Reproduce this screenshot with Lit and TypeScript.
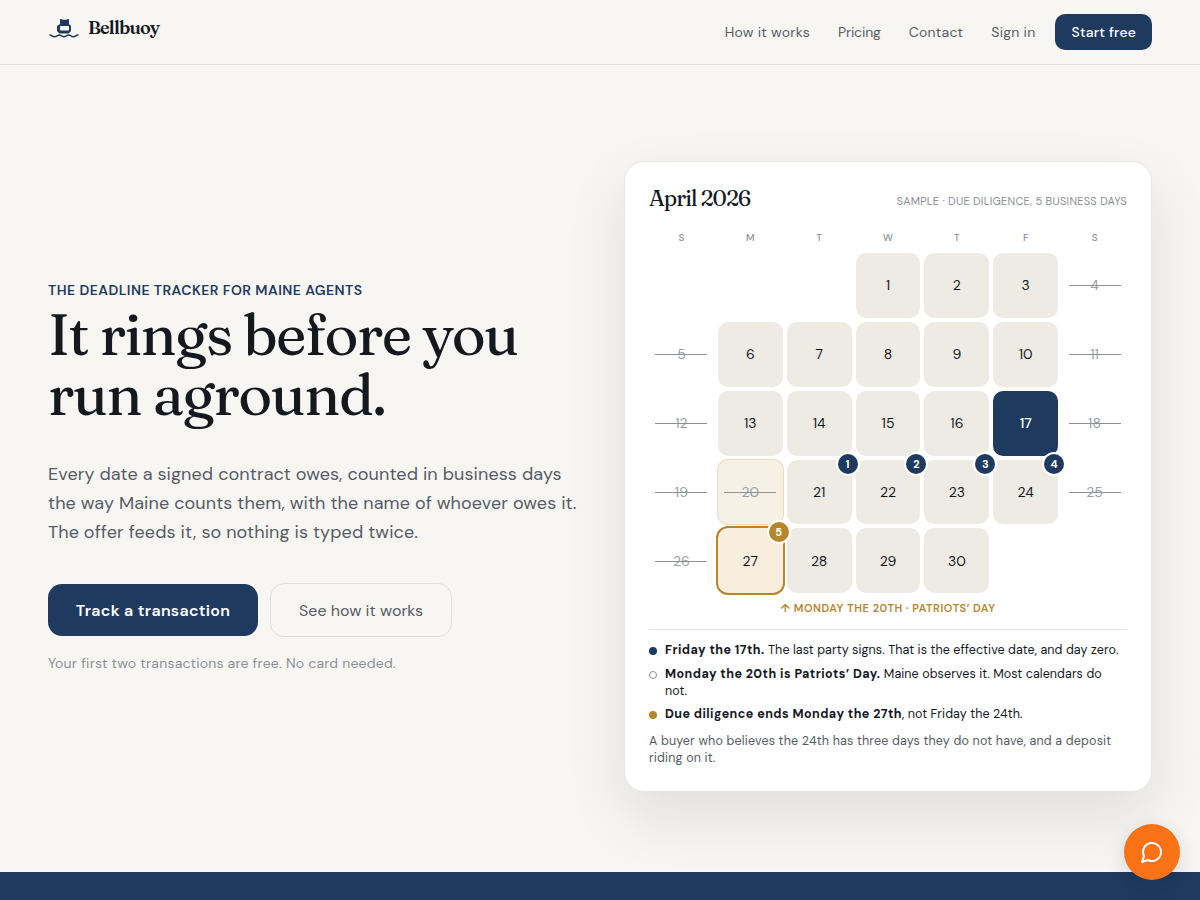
import { LitElement, html, css, nothing } from "lit";
import { customElement } from "lit/decorators.js";

const SANS = css`"DM Sans", "Inter", "Noto Sans", sans-serif`;
const SERIF = css`"Fraunces", "Liberation Serif", serif`;

type Cell = { d?: number; k?: string; b?: number };
const cells: Cell[] = [
  {}, {}, {}, { d: 1 }, { d: 2 }, { d: 3 }, { d: 4, k: "off" },
  { d: 5, k: "off" }, { d: 6 }, { d: 7 }, { d: 8 }, { d: 9 }, { d: 10 }, { d: 11, k: "off" },
  { d: 12, k: "off" }, { d: 13 }, { d: 14 }, { d: 15 }, { d: 16 }, { d: 17, k: "start" }, { d: 18, k: "off" },
  { d: 19, k: "off" }, { d: 20, k: "holiday" }, { d: 21, b: 1 }, { d: 22, b: 2 }, { d: 23, b: 3 }, { d: 24, b: 4 }, { d: 25, k: "off" },
  { d: 26, k: "off" }, { d: 27, k: "end", b: 5 }, { d: 28 }, { d: 29 }, { d: 30 }, {}, {},
];

@customElement("app-root")
export class AppRoot extends LitElement {
  static styles = css`
    :host { display: block; font-family: ${SANS}; background: #f7f6f3; color: #14181f; height: 900px; overflow: hidden; position: relative; }
    * { box-sizing: border-box; }
    header { height: 65px; border-bottom: 1px solid #e2e0da; padding: 0 48px; display: flex; justify-content: space-between; align-items: center; }
    .brand { display: flex; align-items: center; gap: 8px; margin-top: -9px; }
    .brand svg { display: block; }
    .brand span { font-family: ${SERIF}; font-variation-settings: "opsz" 144; font-size: 18px; font-weight: 600; letter-spacing: -0.8px; color: #14181f; }
    nav { display: flex; align-items: center; gap: 28px; font-size: 14px; color: #565c66; }
    nav .cta { background: #1e3a5f; color: #fff; border-radius: 10px; height: 36px; padding: 0 16px; display: flex; align-items: center; font-weight: 500; margin-left: -8px; letter-spacing: 0.2px; }
    nav span { letter-spacing: 0.25px; }
    nav .tight { letter-spacing: -0.15px; }
    main { display: grid; grid-template-columns: minmax(0, 1fr) minmax(0, 1fr); gap: 48px; padding: 96px 48px 80px; align-items: center; height: 807px; }
    .eyebrow { font-size: 14px; font-weight: 600; color: #1e3a5f; letter-spacing: 0.45px; line-height: 18px; }
    h1 { font-family: ${SERIF}; font-variation-settings: "opsz" 144; font-weight: 500; font-size: 58px; line-height: 60px; margin: 5px 0 0; letter-spacing: -1.6px; color: #14181f; }
    .lede { font-size: 18px; line-height: 29px; color: #565c66; margin: 36px 0 0; white-space: nowrap; letter-spacing: 0.1px; }
    .actions { display: flex; gap: 12px; margin-top: 36px; align-items: center; }
    .btn { height: 52px; border-radius: 14px; display: flex; align-items: center; justify-content: center; font-size: 16px; }
    .primary { width: 210px; background: #1e3a5f; color: #fff; font-weight: 600; letter-spacing: 0.3px; }
    .secondary { width: 182px; height: 54px; border: 1px solid #e2e0da; color: #565c66; }
    .fine { font-size: 14px; color: #8b9098; margin: 17px 0 0; line-height: 18px; letter-spacing: 0.2px; }
    .card { background: #fff; border: 1px solid #e8e6e1; border-radius: 20px; padding: 24px; height: 631px; box-shadow: 0 24px 60px rgba(20,24,31,0.1); }
    .card-head { display: flex; justify-content: space-between; align-items: center; height: 25px; }
    .card-head h2 { font-family: ${SERIF}; font-variation-settings: "opsz" 144; font-weight: 500; font-size: 22px; line-height: 25px; margin: 0; letter-spacing: -1px; color: #14181f; }
    .card-head span { font-size: 11px; color: #8b9098; text-transform: uppercase; letter-spacing: 0.25px; position: relative; top: 2px; }
    .dow { display: grid; grid-template-columns: repeat(7, minmax(0, 1fr)); gap: 4px; margin-top: 20px; text-align: center; font-size: 10px; font-weight: 500; color: #8b9098; line-height: 14px; }
    .grid { display: grid; grid-template-columns: repeat(7, minmax(0, 1fr)); gap: 4px; margin-top: 8px; }
    .cell { aspect-ratio: 1; border-radius: 10px; display: flex; align-items: center; justify-content: center; font-size: 14px; position: relative; background: #eeebe4; color: #14181f; }
    .blank { background: none; }
    .off { background: none; color: #9aa0a8; }
    .off::after, .holiday::after { content: ""; position: absolute; left: 10%; right: 10%; top: 50%; height: 1px; background: #8b9098; }
    .holiday { background: #f7f1e5; color: #9aa0a8; box-shadow: 0 0 0 1px #e9dcc0; }
    .start { background: #1e3a5f; color: #fff; font-weight: 500; }
    .end { background: #f7eedd; box-shadow: 0 0 0 2px #b5862c; }
    .badge { position: absolute; top: -6px; right: -6px; width: 20px; height: 20px; border-radius: 50%; background: #1e3a5f; color: #fff; font-size: 11px; font-weight: 700; display: flex; align-items: center; justify-content: center; box-shadow: 0 0 0 2px #fff; z-index: 1; }
    .end .badge { background: #b5862c; }
    .caption { text-align: center; font-size: 11px; font-weight: 600; color: #b5862c; letter-spacing: 0.55px; line-height: 14px; margin-top: 8px; text-transform: uppercase; }
    .rule { height: 1px; background: #e8e6e1; margin-top: 14px; }
    ul { list-style: none; margin: 12px 0 0; padding: 0; display: flex; flex-direction: column; gap: 6.500px; font-size: 12.500px; line-height: 17px; color: #14181f; letter-spacing: 0.08px; }
    li { display: flex; gap: 8px; }
    li i { flex: none; width: 8px; height: 8px; border-radius: 50%; margin-top: 5px; }
    li b { font-weight: 700; letter-spacing: 0.45px; }
    .d1 { background: #1e3a5f; }
    .d2 { border: 1px solid #8b9098; background: #fff; }
    .d3 { background: #b5862c; }
    .note { font-size: 12.500px; line-height: 17px; color: #565c66; margin: 9.500px 0 0; letter-spacing: 0.17px; }
    footer { position: absolute; left: 0; right: 0; bottom: 0; height: 28px; background: #1e3a5f; }
    .fab { position: absolute; right: 20px; bottom: 20px; width: 56px; height: 56px; border-radius: 50%; background: #f97316; display: flex; align-items: center; justify-content: center; box-shadow: 0 6px 20px rgba(20,24,31,0.15); z-index: 2; }
  `;

  render() {
    return html`
      <header>
        <div class="brand">
          <svg width="32" height="24" viewBox="0 0 32 24" fill="none">
            <path d="M12 8V4q0-1.500 1.200-1l1.500.8h3.600l1.500-.8q1.200-.5 1.200 1V8l2 2v5l-2.500 2.500h-9L9 15v-5Z" fill="#1e3a5f"/>
            <rect x="12" y="10" width="9" height="4.500" rx="1" fill="#f7f6f3"/>
            <path d="M2 19c1.800 0 2.300 1.700 4.500 1.700S9.300 19 11.300 19s2.500 1.700 4.700 1.700 2.600-1.700 4.700-1.700 2.500 1.700 4.700 1.700S28 19 30 19" stroke="#1e3a5f" stroke-width="1.500" stroke-linecap="round"/>
          </svg>
          <span>Bellbuoy</span>
        </div>
        <nav>
          <span>How it works</span><span class="tight">Pricing</span><span>Contact</span><span>Sign in</span>
          <span class="cta">Start free</span>
        </nav>
      </header>
      <main>
        <section>
          <div class="eyebrow">THE DEADLINE TRACKER FOR MAINE AGENTS</div>
          <h1>It rings before you<br />run aground.</h1>
          <p class="lede">Every date a signed contract owes, counted in business days<br />the way Maine counts them, with the name of whoever owes it.<br />The offer feeds it, so nothing is typed twice.</p>
          <div class="actions">
            <div class="btn primary">Track a transaction</div>
            <div class="btn secondary">See how it works</div>
          </div>
          <p class="fine">Your first two transactions are free. No card needed.</p>
        </section>
        <section class="card">
          <div class="card-head"><h2>April 2026</h2><span>Sample · due diligence, 5 business days</span></div>
          <div class="dow">${["S", "M", "T", "W", "T", "F", "S"].map((d) => html`<div>${d}</div>`)}</div>
          <div class="grid">
            ${cells.map((c) => html`<div class="cell ${c.d ? c.k ?? "" : "blank"}">${c.d ?? nothing}${c.b ? html`<span class="badge">${c.b}</span>` : nothing}</div>`)}
          </div>
          <div class="caption">↑ Monday the 20th · Patriots’ Day</div>
          <div class="rule"></div>
          <ul>
            <li><i class="d1"></i><span><b>Friday the 17th.</b> The last party signs. That is the effective date, and day zero.</span></li>
            <li><i class="d2"></i><span><b>Monday the 20th is Patriots’ Day.</b> Maine observes it. Most calendars do not.</span></li>
            <li><i class="d3"></i><span><b>Due diligence ends Monday the 27th</b>, not Friday the 24th.</span></li>
          </ul>
          <p class="note">A buyer who believes the 24th has three days they do not have, and a deposit riding on it.</p>
        </section>
      </main>
      <footer></footer>
      <div class="fab">
        <svg width="24" height="24" viewBox="0 0 24 24" fill="none" stroke="#fff" stroke-width="2" stroke-linecap="round" stroke-linejoin="round">
          <path d="M7.900 20A9 9 0 1 0 4 16.100L2 22Z"/>
        </svg>
      </div>
    `;
  }
}
